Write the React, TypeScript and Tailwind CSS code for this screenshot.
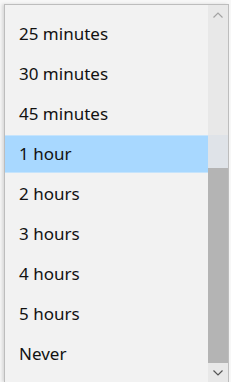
import React from 'react';

const items = ['25 minutes', '30 minutes', '45 minutes', '1 hour', '2 hours', '3 hours', '4 hours', '5 hours', 'Never'];

function Chevron({ up }: { up?: boolean }) {
  return (
    <svg width="10" height="6" viewBox="0 0 10 6" fill="none">
      <path
        d={up ? 'M0.5 5.5 L5 1 L9.5 5.5' : 'M0.5 0.5 L5 5 L9.5 0.5'}
        stroke={up ? '#a3a3a3' : '#555555'}
        strokeWidth="1.2"
      />
    </svg>
  );
}

export default function App() {
  const selected = 3;
  return (
    <div className="w-[231px] h-[382px] bg-[#f7f7f7] pl-[4px] pt-[4px] pr-[2px] overflow-hidden" style={{ fontFamily: '"Noto Sans", "Open Sans", sans-serif' }}>
      <div className="h-[378px] flex border-l border-t border-r border-[#bdbdbd] bg-[#f2f2f2] shadow-[-2px_0_3px_rgba(0,0,0,0.12)]">
        <div className="flex-1 pt-[9px]">
          {items.map((label, i) => (
            <div key={label} className="h-[40px] flex">
              {i === selected ? (
                <div className="flex-1 my-[1px] flex items-center pl-[14px] bg-[#a8d8ff] border-y border-[#c6e4fc] text-[17px] text-[#111]">
                  {label}
                </div>
              ) : (
                <div className="flex-1 flex items-center pl-[14px] text-[17px] text-[#111]">{label}</div>
              )}
            </div>
          ))}
        </div>
        <div className="w-[20px] flex flex-col bg-[#e8e8e8]">
          <div className="h-[20px] flex items-center justify-center">
            <Chevron up />
          </div>
          <div className="h-[110px]" />
          <div className="h-[33px] bg-[#dfe3e8]" />
          <div className="h-[195px] bg-[#b4b4b4]" />
          <div className="flex-1 flex items-center justify-center">
            <Chevron />
          </div>
        </div>
      </div>
    </div>
  );
}
